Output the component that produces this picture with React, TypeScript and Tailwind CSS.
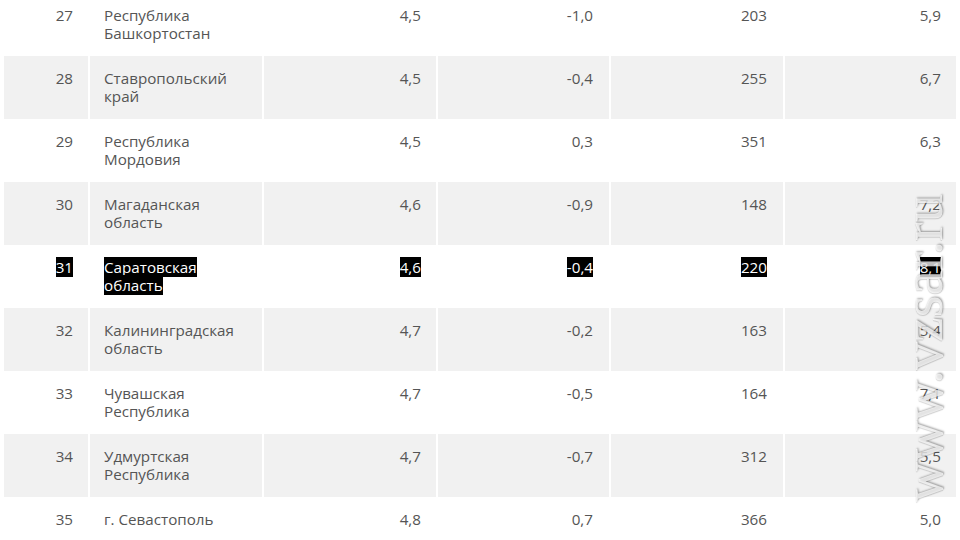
import React from 'react';

type Row = { n: number; name: string[]; a: string; b: string; c: string; d: string };

const rows: Row[] = [
  { n: 27, name: ['Республика', 'Башкортостан'], a: '4,5', b: '-1,0', c: '203', d: '5,9' },
  { n: 28, name: ['Ставропольский', 'край'], a: '4,5', b: '-0,4', c: '255', d: '6,7' },
  { n: 29, name: ['Республика', 'Мордовия'], a: '4,5', b: '0,3', c: '351', d: '6,3' },
  { n: 30, name: ['Магаданская', 'область'], a: '4,6', b: '-0,9', c: '148', d: '7,2' },
  { n: 31, name: ['Саратовская', 'область'], a: '4,6', b: '-0,4', c: '220', d: '8,1' },
  { n: 32, name: ['Калининградская', 'область'], a: '4,7', b: '-0,2', c: '163', d: '5,4' },
  { n: 33, name: ['Чувашская', 'Республика'], a: '4,7', b: '-0,5', c: '164', d: '7,1' },
  { n: 34, name: ['Удмуртская', 'Республика'], a: '4,7', b: '-0,7', c: '312', d: '5,5' },
  { n: 35, name: ['г. Севастополь'], a: '4,8', b: '0,7', c: '366', d: '5,0' },
];

const Mark: React.FC<{ on: boolean; children: React.ReactNode }> = ({ on, children }) =>
  on ? <span className="bg-black text-white">{children}</span> : <>{children}</>;

const App: React.FC = () => {
  return (
    <div
      className="relative w-[960px] h-[540px] overflow-hidden bg-white text-[15.2px] leading-[18px] text-[#555]"
      style={{ fontFamily: '"Open Sans", "Noto Sans", sans-serif' }}
    >
      <div className="mt-[-7px] px-[4px]">
        {rows.map((r, i) => {
          const hl = r.n === 31;
          const bg = i % 2 === 1 ? 'bg-[#f1f1f1]' : 'bg-white';
          const cell = `${bg} h-[63px] pt-[13px]`;
          return (
            <div key={r.n} className="grid grid-cols-[84px_172px_172px_171px_172px_171px] gap-x-[2px]">
              <div className={`${cell} text-right pr-[15px]`}>
                <Mark on={hl}>{r.n}</Mark>
              </div>
              <div className={`${cell} pl-[14px]`}>
                {hl ? (
                  <span className="bg-black text-white">
                    {r.name[0]}
                    <br />
                    {r.name[1]}
                  </span>
                ) : (
                  r.name.map((l) => <div key={l}>{l}</div>)
                )}
              </div>
              <div className={`${cell} text-right pr-[15px]`}>
                <Mark on={hl}>{r.a}</Mark>
              </div>
              <div className={`${cell} text-right pr-[16px]`}>
                <Mark on={hl}>{r.b}</Mark>
              </div>
              <div className={`${cell} text-right pr-[16px]`}>
                <Mark on={hl}>{r.c}</Mark>
              </div>
              <div className={`${cell} text-right pr-[15px]`}>
                <Mark on={hl}>{r.d}</Mark>
              </div>
            </div>
          );
        })}
      </div>

      {/* watermark */}
      <div
        className="pointer-events-none absolute left-[923px] top-[348px] -translate-x-1/2 -translate-y-1/2 -rotate-90 whitespace-nowrap text-[56px] leading-none text-white/75"
        style={{
          fontFamily: '"Liberation Serif", serif',
          textShadow: '1px 1px 2px rgba(0,0,0,0.35), -1px 0 1px rgba(0,0,0,0.15)',
        }}
      >
        www.vzsar.ru
      </div>
    </div>
  );
};

export default App;
